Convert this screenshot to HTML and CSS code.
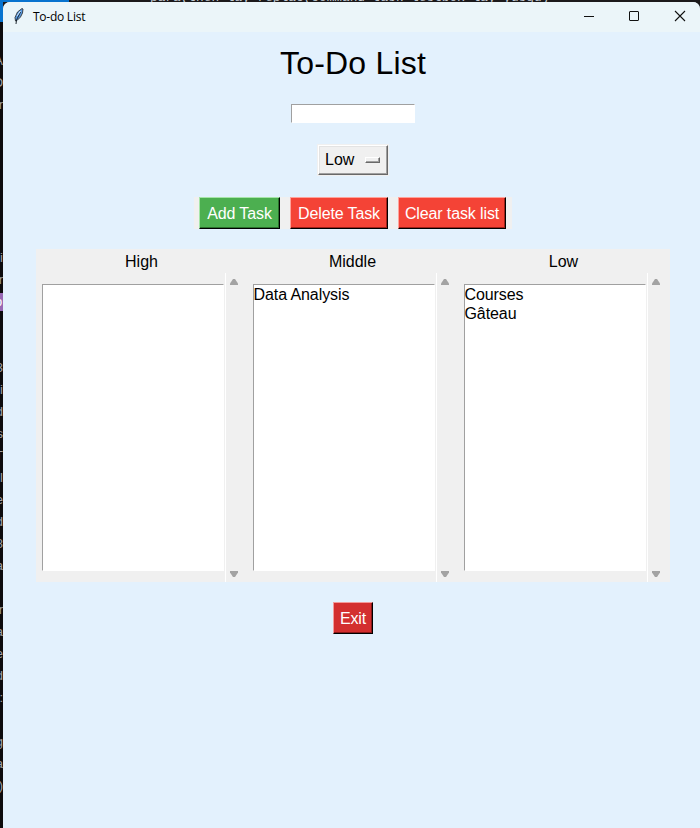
FILE: index.html
```html
<!DOCTYPE html>
<html lang="en">
<head>
<meta charset="utf-8">
<title>To-do List</title>
<link rel="stylesheet" href="styles.css">
</head>
<body>
<div class="desktop">
  <div class="backdrop-top"><span class="blue"></span><span class="code">para(then lay replac(command task lestbox lay yusgu)</span></div>
  <div class="gutter">
    <span class="blue-edge"></span>
    <div class="lines upper"><span>A</span><span>O</span><span>r</span></div>
    <div class="lines lower"><span>i</span><span>r</span><span class="mark">o</span><span></span><span></span><span>3</span><span>i</span><span>d</span><span>s</span><span>T</span><span>l</span><span>e</span><span>d</span><span>8</span><span>a</span><span></span><span>r</span><span>a</span><span>e</span><span>d</span><span>:</span><span></span><span>g</span><span>a</span><span>)</span></div>
  </div>
  <main class="window">
    <header class="titlebar">
      <svg class="feather" width="12" height="18" viewBox="0 0 12 18"><path d="M2.500 14 2 10.500 4.500 5 9 1.500 10 2 9.500 6 7.500 10 4 13.500Z" fill="#5b9ae0" stroke="#222" stroke-width=".8"/><path d="M3 17 3.500 13 7.500 5" fill="none" stroke="#101820" stroke-width=".9"/><path d="M4 9 7.500 4" stroke="#cfe5fa" stroke-width="1"/></svg>
      <span class="caption">To-do List</span>
      <svg class="controls" width="104" height="12" viewBox="0 0 104 12" fill="none" stroke="#111"><path d="M0 6.500H10"/><rect x="45.500" y="1.500" width="9" height="9" rx=".5"/><path d="M91 1 101 11M101 1 91 11" stroke-width="1.100"/></svg>
    </header>
    <h1>To-Do List</h1>
    <div class="entry"></div>
    <div class="option"><span>Low</span><i></i></div>
    <div class="actions">
      <div class="button green">Add Task</div>
      <div class="button red">Delete Task</div>
      <div class="button red">Clear task list</div>
    </div>
    <section class="board">
      <div class="column">
        <h2>High</h2>
        <div class="list"></div>
        <div class="scroll"><svg width="8" height="6"><path d="M0 6V4.500L3 0H5L8 4.500V6Z"/></svg><svg width="8" height="6"><path d="M0 0V1.500L3 6H5L8 1.500V0Z"/></svg></div>
      </div>
      <div class="column">
        <h2>Middle</h2>
        <div class="list"><p>Data Analysis</p></div>
        <div class="scroll"><svg width="8" height="6"><path d="M0 6V4.500L3 0H5L8 4.500V6Z"/></svg><svg width="8" height="6"><path d="M0 0V1.500L3 6H5L8 1.500V0Z"/></svg></div>
      </div>
      <div class="column">
        <h2>Low</h2>
        <div class="list"><p>Courses</p><p>Gâteau</p></div>
        <div class="scroll"><svg width="8" height="6"><path d="M0 6V4.500L3 0H5L8 4.500V6Z"/></svg><svg width="8" height="6"><path d="M0 0V1.500L3 6H5L8 1.500V0Z"/></svg></div>
      </div>
    </section>
    <div class="button exit">Exit</div>
  </main>
</div>
</body>
</html>
```
FILE: styles.css
```css
* { box-sizing: border-box; }
body { margin: 0; font-family: "Liberation Sans", Arial, sans-serif; font-size: 16px; color: #000; }
.desktop {
  width: 700px; height: 828px; overflow: hidden; background: #1b191b;
  display: grid; grid-template: 2px 826px / 3px 697px;
}
.backdrop-top { grid-column: 1 / 3; display: flex; overflow: hidden; }
.blue { width: 69px; height: 8px; background: #0873cf; flex: none; }
.code { margin: -9px 0 0 81px; font: 12.8px/14px "Liberation Mono", monospace; color: #c4cad2; white-space: nowrap; height: 14px; }
.gutter { overflow: hidden; background: #0d0b0d; color: #a0a0a4; font: 13px/22px "Liberation Sans", sans-serif; }
.blue-edge { display: block; height: 20px; background: #0873cf; }
.lines { display: flex; flex-direction: column; align-items: flex-end; }
.lines span { height: 22px; flex: none; }
.upper { padding-top: 28px; }
.lower { padding-top: 131px; }
.lines .mark { width: 8px; height: 18px; margin: 2px 0; line-height: 18px; background: #9868b4; color: #fff; }
.window {
  background: #e3f1fd; border-radius: 7px 7px 0 0; overflow: hidden;
  display: flex; flex-direction: column; align-items: center;
}
.titlebar { width: 697px; height: 30px; background: #ebf5f9; display: flex; align-items: center; padding: 0 15px 0 10px; flex: none; }
.feather { margin-top: -2px; }
.caption { font: 12px/16px "Open Sans", "Noto Sans", sans-serif; margin-left: 8px; letter-spacing: -.25px; }
.controls { margin: -2px -3px 0 auto; }
h1 { margin: 13px 0 0 3px; font-size: 32px; line-height: 36px; font-weight: 400; letter-spacing: .2px; }
.entry { width: 124px; height: 19px; margin: 23px 0 0 3px; background: #fff; border: 1px solid; border-color: #a0a0a0 #fff #fff #a0a0a0; flex: none; }
.option {
  width: 70px; height: 30px; margin: 22px 0 0 3px; flex: none;
  background: #f0f0f0; border: 1px solid; border-color: #fff #696969 #696969 #fff;
  box-shadow: inset -1px -1px #a0a0a0, inset 1px 1px #e3e3e3, 0 0 0 1px #f0f0f0;
  display: flex; align-items: center; justify-content: space-between; padding: 0 7px 0 6px;
}
.option i { width: 15px; height: 6px; border: 1px solid; border-color: #fff #696969 #696969 #fff; box-shadow: inset -1px -1px #a0a0a0; }
.actions { width: 318px; height: 32px; margin: 22px 0 0 2px; background: #f0f0f0; display: flex; justify-content: center; gap: 10px; flex: none; }
.button {
  height: 32px; flex: none; line-height: 31px; color: #fff; white-space: nowrap;
  border: 1px solid; letter-spacing: -.12px;
  display: flex; align-items: center; justify-content: center;
}
.green { width: 81px; background: #4caf50; border-color: #a6e5a8 #000 #000 #a6e5a8; box-shadow: inset -1px -1px #2b702d; }
.red { background: #f44336; border-color: #ffa39b #000 #000 #ffa39b; box-shadow: inset -1px -1px #a02018; }
.red:nth-child(2) { width: 98px; }
.red:nth-child(3) { width: 108px; }
.exit { width: 40px; margin: 20px 0 0 3px; background: #d32f2f; border-color: #f39b9b #000 #000 #f39b9b; box-shadow: inset -1px -1px #8a1919; }
.board { width: 634px; height: 333px; margin: 20px 0 0 2px; padding-right: 1px; background: #f0f0f0; display: flex; flex: none; }
.column { width: 211px; display: grid; grid-template: 24px 309px / 189px 22px; }
h2 { grid-column: 1 / 3; margin: 0 0 0 1px; font-size: 16px; line-height: 25px; font-weight: 400; text-align: center; }
.list { width: 182px; height: 287px; margin: 11px 0 0 6px; background: #fff; border: 1px solid; border-color: #a0a0a0 #fff #fff #a0a0a0; }
.list p { margin: 0; line-height: 19px; letter-spacing: -.08px; }
.scroll { border-left: 1px solid #fff; padding: 6px 0 5px 4px; display: flex; flex-direction: column; justify-content: space-between; }
.scroll svg { fill: #a3a3a3; }
```
